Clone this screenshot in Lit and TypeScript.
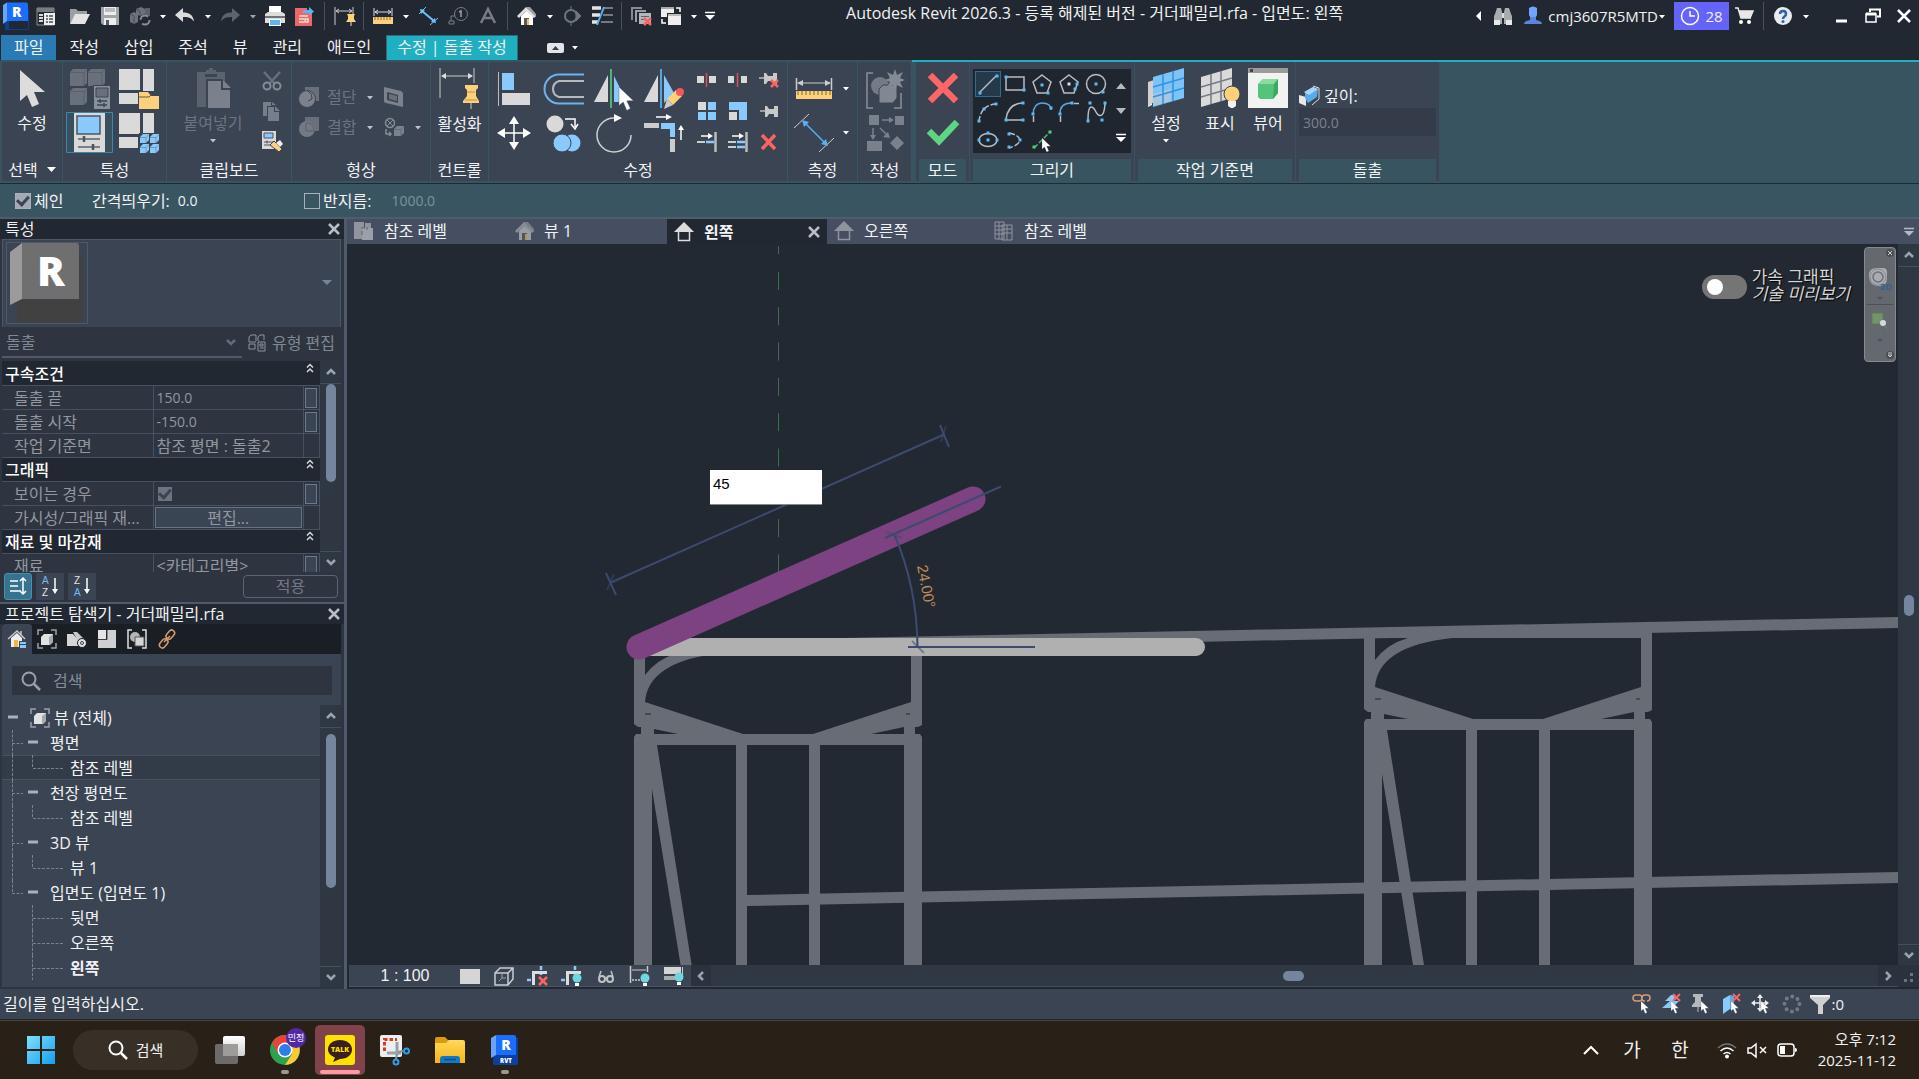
import { LitElement, html, svg, css, nothing } from "lit";
import { customElement, state } from "lit/decorators.js";
import { classMap } from "lit/directives/class-map.js";

const W = "#d9d9d9";
const B = "#8ac9fb";
const G = "#69707c";
const Y = "#fdd17c";
const R = "#fb6462";
const N = "#3b4453";

const icon = (w: number, h: number, body: unknown) =>
  html`<svg class="ico" width=${w} height=${h} viewBox="0 0 ${w} ${h}" fill="none" aria-hidden="true">${body}</svg>`;

const caret = (c = "#fff") => icon(8, 5, svg`<path d="M1 1h6L4 4.500z" fill=${c}/>`);
const chevron = (dir: "up" | "down" | "left" | "right") => {
  const d = { up: "M3 8l4-4 4 4", down: "M3 5l4 4 4-4", left: "M9 3L5 7l4 4", right: "M5 3l4 4-4 4" }[dir];
  return icon(14, 14, svg`<path d=${d} stroke="#9aa3b2" stroke-width="2.500"/>`);
};
const cross = (size: number, c: string, w: number) =>
  icon(size, size, svg`<path d="M1 1L${size - 1} ${size - 1}M${size - 1} 1L1 ${size - 1}" stroke=${c} stroke-width=${w}/>`);

/* Quick access bar */
const revitLogo = icon(28, 28, svg`
  <path d="M3 5l4-2v24h18a1 1 0 0 0 1-1V8l1-1v19a2 2 0 0 1-2 2H3z" fill="#0b3f96"/>
  <path d="M1 3l4-2.500V19l-4 3z" fill="#6aa5f5"/><path d="M5 .5h19q2 0 2 2V19H5z" fill="#1b6dfb"/>
  <text x="10" y="15" font-family="Open Sans,sans-serif" font-weight="800" font-size="14" fill="#fff">R</text>`);
const qHome = icon(20, 20, svg`<path d="M1 2h17v17H1z" stroke="#8b8f95"/><path d="M1 2h17v4H1z" fill="#777c83"/><path d="M3 8h4v2H3zM3 11h4v2H3zM3 14h4v2H3z" fill=${W}/><path d="M8 7h11v12H8z" fill="#eee"/><path d="M10 10h2m1 0h4M10 13h2m1 0h4M10 16h2m1 0h4" stroke="#444b57" stroke-width="1.500"/>`);
const qOpen = icon(22, 20, svg`<path d="M1 18V3h6l2 2h9v4H6z" fill="#9b9fa4"/><path d="M1 18L6 8h15l-5 10z" fill="#e4e4e4"/>`);
const qSave = icon(20, 20, svg`<path d="M1 1h18v18H3l-2-2z" fill="#a2a5aa"/><path d="M4 1h12v8H4z" fill="#eee"/><path d="M5 3h10M5 5h10" stroke="#888" stroke-width="1"/><path d="M4 12h12v7H4z" fill="#eee"/><path d="M6 14h3v5H6z" fill="#555c66"/>`);
const qSync = icon(22, 20, svg`<path d="M1 8l4-2 4 2v8l-4 2-4-2zM7 3l5-2 4 2v5l-5 2-4-2z" fill="#6d7178"/><path d="M1 8l4 2v8M7 3l4 2v5" stroke="#4b5059"/><path d="M16 2h5v8h-5z" fill="#5c6169"/><circle cx="16" cy="14" r="4.500" stroke="#8a8f97" stroke-width="2" stroke-dasharray="10 4"/>`);
const arrowBack = (c: string) => svg`<path d="M1 9l8-7v4.500c6 0 10 2 11 9-3-4-6-4.500-11-4.500v5z" fill=${c}/>`;
const qUndo = icon(22, 20, arrowBack("#dcdcdc"));
const qRedo = icon(22, 20, svg`<g transform="matrix(-1 0 0 1 22 0)">${arrowBack("#5d636d")}</g>`);
const qPrint = icon(22, 20, svg`<path d="M5 0h12v7H5z" fill="#fff"/><path d="M1 8l3-2h14l3 2v9H1z" fill="#dcdcdc"/><path d="M1 10h20v2H1z" fill="#6d737c"/><path d="M5 13h12v7H5z" fill="#fff"/><path d="M6 14h10v5H6z" fill="#5db6f7"/>`);
const qExport = icon(22, 20, svg`<path d="M1 2h12v5h5v13H1z" fill="#e9686a"/><path d="M5 10h9M5 13h5M5 16h5M11 13h3v3h-3z" stroke="#fbdada" stroke-width="1.500"/><path d="M9 4h6V1l5 4.500-5 4V7H9z" fill="#57b5f5"/>`);
const qDimPin = icon(22, 20, svg`<path d="M2 1v18M20 1v8" stroke="#ccc"/><path d="M3 5h16M6 3L3 5l3 2M16 3l3 2-3 2" stroke="#ccc"/><path d="M14 8h8l-1 2v3l2 3H13l2-3v-3z" fill=${Y}/><path d="M18 16v4" stroke="#ddd"/>`);
const qMeasure = icon(22, 20, svg`<path d="M2 2v8M20 2v8M3 6h16M6 4L3 6l3 2M16 4l3 2-3 2" stroke="#ddd"/><path d="M1 11h20v7H1z" fill=${Y}/><path d="M3 11v3m3-3v3m3-3v3m3-3v3m3-3v3m3-3v3" stroke="#8d6b2b"/>`);
const qAligned = icon(22, 20, svg`<path d="M2 8l7-7M13 19l8-7" stroke="#6fc0fa"/><path d="M5 5l12 10" stroke="#6fc0fa" stroke-width="2"/><path d="M3 3l5 1-4 4zM19 17l-5-1 4-4z" fill="#6fc0fa"/>`);
const qTag = icon(22, 20, svg`<circle cx="14" cy="8" r="6.500" stroke="#777c83"/><path d="M8 10H4v5M2 15h5v3H2z" stroke="#777c83"/><path d="M12 6l2-1v6" stroke="#9a9ea5" stroke-width="1.500"/>`);
const qText = icon(20, 20, svg`<path d="M3 17L10 3l7 14M6 12h8" stroke="#777c83" stroke-width="2.500"/>`);
const house = (roof: string, wall: string, door: string) => svg`<path d="M5 10v9h12v-9l-6-6z" fill=${wall}/><path d="M1 10l9-9 10 9-2 2-8-7-7 7z" fill=${roof}/><path d="M10 1l4-0 6 7v3z" fill="#9a9da1"/><path d="M8 12h5v7H8z" fill="#565b62"/><path d="M11 13h2v6h-2z" fill=${door}/>`;
const qHouse = icon(22, 20, house("#e0e0e0", "#fff", "#f3c155"));
const qSection = icon(22, 20, svg`<circle cx="10" cy="10" r="6" stroke="#6f757e" stroke-width="2"/><path d="M15 5l5 5-5 5zM10 0v4m0 12v4" fill="#6f757e" stroke="#6f757e"/>`);
const qThin = icon(22, 20, svg`<path d="M1 2h9M1 9h8M1 16h6" stroke="#e4e4e4" stroke-width="3.500"/><path d="M13 2h9M12 9h10M10 16h12" stroke="#c8c8c8" stroke-width="1"/><path d="M13 1L6 19" stroke="#5daef0" stroke-width="2"/>`);
const qCloseWin = icon(22, 20, svg`<path d="M1 14V1h11v2H3v11z" fill="#888c92"/><path d="M5 16V4h11v2H7v10z" fill="#9a9da3"/><path d="M9 7h12v11H9z" fill="#b4b7bc"/><path d="M11 10h8v1h-8zM11 13h5v1h-5z" fill="#5c626c"/><path d="M14 12l7 7m0-7l-7 7" stroke=${R} stroke-width="2.500"/>`);
const qSwitch = icon(22, 20, svg`<path d="M1 1h13v10H1z" fill="#eee"/><path d="M1 1h13v2H1z" fill="#aaa"/><path d="M7 7h15v13H7z" fill="#222831"/><path d="M8 8h13v11H8z" fill="#eee"/><path d="M8 8h13v2H8z" fill="#bbb"/><path d="M16 2h4v4M2 13v4h4" stroke="#fff" stroke-width="1.500"/>`);
const customize = (c: string) => icon(12, 10, svg`<path d="M1 1.500h10" stroke=${c} stroke-width="1.500"/><path d="M1 4h10L6 9z" fill=${c}/>`);
const binoc = icon(20, 20, svg`<path d="M2 8l2-6h4l1 4v12H1v-8zM18 8l-2-6h-4l-1 4v12h8v-8z" fill="#a8abb0"/><path d="M1 14h6v5H1zM13 14h6v5h-6z" fill="#e8e8e8"/><path d="M9 7h2v5H9z" fill="#ddd"/>`);
const person = icon(20, 20, svg`<path d="M6 2q4-3 8 0v7q-1 3-4 3t-4-3z" fill="#74a3ff"/><path d="M1 18q0-3 6-4v-3h6v3q6 1 6 4z" fill="#5b86e0"/>`);
const clock = icon(20, 20, svg`<circle cx="10" cy="10" r="8.500" stroke="#fff" stroke-width="1.500"/><path d="M10 5v5h5" stroke="#fff" stroke-width="1.500"/>`);
const cart = icon(20, 20, svg`<path d="M1 2h3l3 10h10M4.500 5H19l-3 7" stroke="#eee" stroke-width="1.500"/><path d="M5 5h14l-3 7H7z" fill="#e8e8e8"/><circle cx="7" cy="16" r="2" fill="#fff"/><circle cx="15" cy="16" r="2" fill="#fff"/>`);
const help = icon(20, 20, svg`<circle cx="10" cy="10" r="9" fill="#e9ebee"/><path d="M7 8q0-3 3-3t3 3q0 1.500-1.500 2.500T10 13" stroke="#2c5fb5" stroke-width="2.500"/><circle cx="10" cy="15.500" r="1.500" fill="#2c5fb5"/>`);

/* Ribbon, large */
const cursorBody = (x: number, y: number, k: number) => svg`<path transform="translate(${x} ${y}) scale(${k})" d="M0 0v31l7-6 6 14 6-3-6-13h11z" fill="#fff" stroke="#3b4453" stroke-width=".6"/>`;
const iModify = icon(40, 40, svg`<path d="M8 2v31l7-6 5 12 7-3-5-12h11z" fill="#dcdcdc"/>`);
const cube = (x: number, y: number, s: number, c: string) => svg`<path d="M${x} ${y + 3}l3-3h${s - 3}v${s - 3}l-3 3H${x}z" fill=${c}/><path d="M${x} ${y + 3.5}h${s - 3}v${s - 3.5}M${x + s - 3} ${y + 3.5}l3-3" stroke=${N} stroke-opacity=".35"/>`;
const iTypeProps = icon(40, 40, svg`${cube(0, 0, 17, G)}${cube(18, 0, 17, G)}${cube(0, 19, 17, G)}<path d="M23 16h17v24H23z" fill=${N}/><path d="M24 17h16v23H24z" fill="#8a909b"/><path d="M26 19h12v9H26z" fill=${G} stroke=${N}/><path d="M27 32h10M30 30v4M27 36h10M34 34v4" stroke=${N} stroke-width="1.500"/>`);
const tiles = svg`<path d="M0 0h21v21H0zM24 0h11v25H24zM0 24h19v11H0z" fill="#dadada"/>`;
const iFamilyCat = icon(40, 40, svg`${tiles}<path d="M19 22h22v19H19z" fill=${N}/><path d="M20 23h9l3 4h8v13H20z" fill=${Y}/><path d="M20 28h10l3-3" stroke="#6b5a36"/>`);
const iProps = icon(47, 41, svg`<path d="M.5.5h46v40H.5z" fill="#39505f" stroke="#3d86ac"/><path d="M8 1h31v39H8z" fill=${W}/><path d="M11 4h23v18H11z" fill=${B} stroke="#4c5563" stroke-width="1.500"/><path d="M12 27h22M12 35h22" stroke="#5b626d" stroke-width="1.500"/><path d="M18 24v6M27 32v6" stroke="#4c5563" stroke-width="2.500"/>`);
const iFamilyTypes = icon(40, 40, svg`${tiles}<path d="M20 20h21v21H20z" fill=${N}/>${cube(21, 21, 9, B)}${cube(31, 21, 9, B)}${cube(21, 31, 9, B)}${cube(31, 31, 9, B)}`);
const iPaste = icon(40, 40, svg`<path d="M4 4h9V2h3V0h4v2h3v2h9v35H4z" fill="#5b626e"/><path d="M12 6h12v3H12z" fill=${N}/><path d="M13 11h16l9 9v20H13z" fill=${N}/><path d="M15 13h13v9h9v18H15z" fill="#7a818c"/><path d="M30 12l8 8h-8z" fill="#7a818c"/>`);
const iCut = icon(20, 20, svg`<path d="M2 1l11 12M18 1L7 13" stroke=${G} stroke-width="2.500"/><circle cx="5" cy="15" r="3.500" stroke="#858b95" stroke-width="2"/><circle cx="15" cy="15" r="3.500" stroke="#858b95" stroke-width="2"/>`);
const iCopyClip = icon(20, 20, svg`<path d="M1 1h8v4H5v10H1z" fill="#777e89"/><path d="M6 6h6v5h5v9H6z" fill="#777e89"/><path d="M13 5l5 5h-5zM10 1l4 3h-4z" fill="#777e89"/>`);
const iMatch = icon(20, 20, svg`<path d="M0 0h14v18H0z" fill=${W}/><path d="M2 2h9v5H2z" fill=${B} stroke="#4c5563"/><path d="M2 11h9M2 14h7M5 9.500v3" stroke="#4c5563"/><path d="M8 14l4-4 8 8-3 3z" fill=${Y} stroke=${N}/><path d="M14 12l4-3 3 4-3 3z" fill="#eee"/>`);
const iCope = icon(20, 20, svg`<path d="M6 0h14v14H6z" fill="#69707c"/><circle cx="8" cy="12" r="8.500" fill="#7c828d" stroke=${N}/><path d="M9 4q5 3 4 8l-4 2" stroke=${N}/>`);
const iJoin = icon(20, 20, svg`<path d="M6 0h14v14H6z" fill="#69707c"/><circle cx="8" cy="12" r="8" fill="#737a85"/><path d="M7 6q8-1 8 8H7z" stroke="#59606c"/>`);
const iWallJoin = icon(20, 20, svg`<path d="M0 0l17 4 2 2v14L2 16l-2-1z" fill="#7c828d"/><path d="M3 5l11 3v8L3 13z" fill=${N}/><path d="M5 7l8 2v5l-8-2z" fill=${G}/>`);
const iPaintOff = icon(20, 20, svg`<circle cx="6" cy="6" r="4.500" stroke="#858b95" stroke-width="1.500"/><path d="M3 3l6 6m0-6L3 9" stroke="#858b95"/><path d="M2 12v5h5M5 15l2 2-2 2" stroke="#858b95" stroke-width="1.500"/>${cube(10, 9, 10, "#7c828d")}`);
const pin = svg`<path d="M26 17h13v3l-2 2v6l3 5v2H24v-2l4-5v-6l-2-2z" fill=${Y}/><path d="M28 24h8M26 32h12" stroke="#bb9145"/><path d="M32 35v6" stroke="#ccc"/>`;
const iActivate = icon(41, 41, svg`<path d="M1 0v30M35 0v15" stroke="#c9c9c9"/><path d="M3 8h30" stroke="#c9c9c9"/><path d="M2 8l5-3v6zM34 8l-5-3v6z" fill="#dcdcdc"/>${pin}`);
const iAlign = icon(40, 40, svg`<path d="M4.500 3v34" stroke="#bbb"/><path d="M8 4h12v17H8z" fill=${B}/><path d="M8 24h28v12H8z" fill=${W}/>`);
const iOffset = icon(40, 40, svg`<path d="M40 5.500H15a14.500 14.500 0 0 0 0 29h25" stroke="#6db4ee" stroke-width="2"/><path d="M40 12H15q-6 2-6 8t6 8h25" stroke="#b6b9be" stroke-width="2"/>`);
const iMirrorPick = icon(40, 40, svg`<path d="M14 6v27H0z" fill=${W}/><path d="M20 7l6 12v14h-6z" fill=${B}/><path d="M17 0v39" stroke="#4fb574" stroke-width="2"/>${cursorBody(25, 18, 0.6)}`);
const iMirrorDraw = icon(40, 40, svg`<path d="M14 6v27H0z" fill=${W}/><path d="M20 6l10 18-10 10z" fill=${B}/><path d="M17 0v39" stroke="#5aa4de" stroke-width="2"/><path d="M23 30l9-9 6 6-9 9z" fill=${Y}/><path d="M23 30l6 6-9 4z" fill="#ccc"/><circle cx="36" cy="23" r="4" fill="#f2585c"/>`);
const iMove = icon(40, 40, svg`<path d="M20 8v24M8 20h24" stroke="#fff" stroke-width="1.500"/><path d="M20 3l5 8H15zM20 37l5-8H15zM3 20l8-5v10zM37 20l-8-5v10z" fill="#fff"/>`);
const iCopy = icon(40, 40, svg`<circle cx="11" cy="11" r="8.500" fill=${W}/><path d="M21 6h10v8M27 11l4 5 3-5" stroke="#fff" stroke-width="1.500"/><circle cx="28" cy="30" r="8.500" fill=${B}/><circle cx="18" cy="30" r="9" fill=${B} stroke=${N}/>`);
const iRotate = icon(40, 40, svg`<path d="M20 5a17 17 0 1 0 17 17" stroke="#cfcfcf" stroke-width="1.500" /><path d="M20 1l8 4-8 4z" fill="#fff"/>`);
const iTrim = icon(40, 40, svg`<path d="M0 10h15v5H0z" fill="#ccc"/><path d="M17 10h14v14h-5v-8h-9z" fill=${B}/><path d="M26 26h5v13h-5z" fill="#ccc"/><path d="M12 4h12M37 27V15" stroke="#fff" stroke-width="1.500"/><path d="M22 1l6 3-6 3zM34 17l3-5 3 5z" fill="#fff"/>`);
/* Ribbon, small */
const iSplit = icon(20, 20, svg`<path d="M0 6h7v7H0zM12 6h7v7h-7z" fill=${W}/><path d="M9.500 3v14" stroke="#d65357" stroke-width="1.500"/>`);
const iSplitGap = icon(20, 20, svg`<path d="M0 6h6v7H0zM13 6h6v7h-6z" fill=${W}/><path d="M9.500 3v14" stroke="#d65357" stroke-width="1.500"/>`);
const pinFlat = svg`<path d="M0 8h6" stroke="#bbb" stroke-width="1.500"/><path d="M5 3h2l2 3h5V3h4v11h-4v-3H9l-2 3H5z" fill="#c9c9c9"/>`;
const iUnpin = icon(20, 20, svg`${pinFlat}<path d="M12 10l7 7m0-7l-7 7" stroke=${R} stroke-width="2.500"/>`);
const iPin = icon(20, 20, svg`<g transform="translate(1 2)">${pinFlat}</g>`);
const iArray = icon(20, 20, svg`<path d="M1 1h8v8H1z" fill=${W}/><path d="M11 1h8v8h-8zM1 11h8v8H1zM11 11h8v8h-8z" fill=${B}/>`);
const iScale = icon(20, 20, svg`<path d="M1 1h18v18h-8v-10H1z" fill=${B}/><path d="M1 11h8v8H1z" fill=${W}/>`);
const iExtend = icon(20, 20, svg`<path d="M4 4h8" stroke="#fff" stroke-width="1.500"/><path d="M11 1l5 3-5 3z" fill="#fff"/><path d="M0 10h8" stroke="#ccc" stroke-width="2"/><path d="M9 10h8" stroke=${B} stroke-width="2.500"/><path d="M18.500 0v20" stroke="#bbb" stroke-width="2.500"/>`);
const iExtendMulti = icon(20, 20, svg`<path d="M4 4h8" stroke="#fff" stroke-width="1.500"/><path d="M11 1l5 3-5 3z" fill="#fff"/><path d="M0 10h8M0 15h8" stroke="#ccc" stroke-width="2"/><path d="M9 10h8M9 15h8" stroke=${B} stroke-width="2.500"/><path d="M18.500 0v20" stroke="#bbb" stroke-width="2.500"/>`);
const iDelete = icon(20, 20, svg`<path d="M3 3l13 14M16 3L3 17" stroke=${R} stroke-width="3.500"/>`);
const iMeasure = icon(40, 40, svg`<path d="M2.500 9v12M37.500 9v12" stroke="#ccc" stroke-width="1.500"/><path d="M4 14h32" stroke="#ccc"/><path d="M3 14l6-3v6zM37 14l-6-3v6z" fill="#ccc"/><path d="M2 22h36v8H2z" fill=${Y}/><path d="M4 22v4m4-4v4m4-4v4m4-4v4m4-4v4m4-4v4m4-4v4m4-4v4m4-4v4" stroke="#7a6238"/>`);
const iDimension = icon(40, 40, svg`<path d="M0 15L15 1M25 39l15-14" stroke="#ccc"/><path d="M10 9l22 22" stroke="#5cb0f2" stroke-width="1.500"/><path d="M8 7l7 2-5 5zM34 33l-7-2 5-5z" fill="#5cb0f2"/>`);
const iCreateGroup = icon(40, 40, svg`<path d="M8 4H2v35h6M29 39h7V24" stroke="#8a909b" stroke-width="1.500"/><circle cx="15" cy="17" r="9" fill="#747b86"/><path d="M14 20l4-4h14v13l-4 5H14z" fill="#828893" stroke=${N}/><path d="M30 0l2 6 6-3-3 6 5 2-5 2 3 6-6-3-2 6-2-6-6 3 3-6-5-2 5-2-3-6 6 3z" fill="#858b95"/>`);
const iCreateSimilar = icon(40, 40, svg`<path d="M4 2h10v10H4zM30 3h9v9h-9zM2 28h15v10H2zM25 30l7-7 7 7-7 7z" fill="#7a818c"/><path d="M17 7h9M8 15v9M15 15l8 8" stroke="#7a818c" stroke-width="1.500"/><path d="M24 4l5 3-5 3zM5 22l3 5 3-5zM25 25l-7-1 5-5z" fill="#7a818c"/>`);
const iCancel = icon(32, 32, svg`<path d="M3 3l26 26M29 3L3 29" stroke="#fe6666" stroke-width="6.500"/>`);
const iFinish = icon(32, 32, svg`<path d="M2 15l10 10L30 6" stroke="#5ed584" stroke-width="6.500"/>`);
const dot = (x: number, y: number, c = "#5fb8f5") => svg`<path d="M${x - 1.5} ${y - 1.5}h3v3h-3z" fill=${c}/>`;
const dstroke = "#b9bcc1";
const draws: [string, unknown][] = [
  ["선", svg`<path d="M4 20L20 4" stroke=${dstroke} stroke-width="1.500"/>${dot(4, 21)}${dot(21, 4)}`],
  ["직사각형", svg`<path d="M3 5h18v13H3z" stroke=${dstroke} stroke-width="1.500"/>${dot(3, 5)}${dot(21, 18)}`],
  ["내접 다각형", svg`<path d="M12 3l9 7-4 11H7L3 10z" stroke=${dstroke} stroke-width="1.500"/>${dot(12, 13)}${dot(18, 21)}`],
  ["외접 다각형", svg`<path d="M12 3l9 7-4 11H7L3 10z" stroke=${dstroke} stroke-width="1.500"/>${dot(12, 12, "#ddd")}${dot(20, 12)}${dot(18, 17)}`],
  ["원", svg`<circle cx="12" cy="12" r="9.500" stroke=${dstroke} stroke-width="1.500"/>${dot(12, 12)}${dot(19, 20)}`],
  ["시작-끝-반지름 호", svg`<path d="M3 21Q5 5 20 4" stroke=${dstroke} stroke-width="1.500" stroke-dasharray="5 2"/>${dot(3, 21)}${dot(8, 9)}${dot(20, 4)}`],
  ["중심-끝 호", svg`<path d="M3 19Q5 4 19 3M3 20h16" stroke=${dstroke} stroke-width="1.500"/>${dot(3, 20)}${dot(20, 3)}${dot(20, 20)}`],
  ["접선 끝 호", svg`<path d="M3 14Q4 3 12 3q9 0 9 7" stroke="#5aa8e3" stroke-width="1.500"/><path d="M3.500 16v6" stroke=${dstroke} stroke-width="1.500"/>${dot(3, 14)}${dot(21, 8)}`],
  ["모깎기 호", svg`<path d="M3 14Q3 3 14 3" stroke="#5aa8e3" stroke-width="1.500"/><path d="M3.500 16v6M17 3.500h5" stroke=${dstroke} stroke-width="1.500"/>${dot(3, 14)}${dot(15, 3)}`],
  ["스플라인", svg`<path d="M4 20C4 0 10 8 12 12s8 8 9-8" stroke=${dstroke} stroke-width="1.500"/>${dot(4, 21)}${dot(6, 3)}${dot(18, 20)}${dot(21, 3)}`],
  ["타원", svg`<ellipse cx="12" cy="12" rx="9" ry="6.500" stroke=${dstroke} stroke-width="1.500"/>${dot(3, 12)}${dot(12, 12)}${dot(21, 12)}${dot(12, 5)}`],
  ["부분 타원", svg`<path d="M6 5q10 2 11 7-1 5-11 8" stroke=${dstroke} stroke-width="1.500" stroke-dasharray="6 2"/>${dot(6, 6)}${dot(17, 12)}${dot(6, 19)}`],
  ["선 선택", svg`<path d="M4 20L20 4" stroke="#4fb574" stroke-width="1.500" stroke-dasharray="5 2"/>${dot(4, 19, "#4fd07c")}${dot(20, 4, "#4fd07c")}${cursorBody(12, 10, 0.36)}`],
];
const iWorkPlane = icon(40, 40, svg`<path d="M2 17l4-2v22l-4 2z" fill="#eee"/><path d="M2 14l6-2v22l-6 4z" fill="#d0d0d0"/><path d="M7 9L38 0v30L7 39z" fill="#7cc3f8"/><path d="M7 26l18-5v12L7 38z" fill="#a9c6df"/><path d="M17 6v30M27 3v30M7 19l31-9M7 29l31-9" stroke="#2e93e3" stroke-width="1.500"/>`);
const iShowPlane = icon(40, 40, svg`<path d="M1 9L32 0v30L1 39z" fill="#dadada"/><path d="M11 6v30M21 3v30M1 19l31-9M1 29l31-9" stroke="#777c84" stroke-width="1.500"/><circle cx="32" cy="26" r="8" fill=${Y} stroke=${N}/><path d="M28 33h8v5l-3 2h-2l-3-2z" fill="#f2f2f2"/>`);
const iViewer = icon(40, 40, svg`<path d="M0 0h40v40H0z" fill="#f2f2f2"/><path d="M0 0h40v5H0z" fill="#9b9b9b"/><path d="M2 1h3v3H2z" fill="#444"/><path d="M10 16l5-5h15v14l-5 6H12l-2-2z" fill="#55c47b"/><path d="M10 16l5-5h15l-4 5z" fill="#8adca3"/><path d="M26 16l4-5v14l-5 6z" fill="#3aa961"/>`);
const iDepth = icon(20, 20, svg`<path d="M0 9l7 2v9l-7-3z" fill="#e8e8e8"/><path d="M6 6l8-5 5 2-1 8-9 6-3-5z" fill="#5aa9ea"/><path d="M5 6l9-5 5 2-9 6z" fill="#a8d5f7"/><path d="M14 0l6 2v11l-7 6" stroke="#ddd"/>`);

/* Panels */
const iFamilyThumb = icon(82, 82, svg`<path d="M.5.5h81v81H.5z" stroke="#4c5a6c"/><path d="M11 58h62V14q4 1 4 4v60q0 3-4 3H15q-4 0-4-4z" fill="#414141"/><path d="M4 10L16 1v56L4 63z" fill="#9b9b9b"/><path d="M16 1h54q3 0 3 3v53H16z" fill="#6f6f6f"/><text x="31" y="44" font-family="Open Sans,sans-serif" font-weight="800" font-size="41" fill="#fff">R</text>`);
const iEditType = icon(18, 18, svg`<path d="M1 3l2-2h5v6M1 3v5h7M10 3l2-2h4v5M10 3v4M1 10v5h6M1 10h6v5" stroke="#8e96a3"/><path d="M10 8h7v9h-7z" stroke="#8e96a3"/><path d="M12 10h3v2h-3zM12 14h4" stroke="#8e96a3"/>`);
const iSortList = icon(18, 18, svg`<path d="M1 4h8M1 9h8M1 14h11" stroke="#fff" stroke-width="1.500"/><path d="M14 1v16M11 4l3-3 3 3M11 14l3 3 3-3" stroke="#fff" stroke-width="1.500"/>`);
const sortIcon = (a: string, b: string, ca: string, cb: string) => icon(20, 20, svg`<text x="2" y="8" font-family="Liberation Sans,sans-serif" font-size="10" fill=${ca}>${a}</text><text x="2" y="20" font-family="Liberation Sans,sans-serif" font-size="10" fill=${cb}>${b}</text><path d="M15 2v14" stroke="#fff" stroke-width="1.500"/><path d="M12 13h6l-3 5z" fill="#fff"/>`);
const iDoubleUp = icon(10, 10, svg`<path d="M2 4.500l3-3 3 3M2 9l3-3 3 3" stroke="#d5d8dc" stroke-width="1.500"/>`);
const brackets = svg`<path d="M6 1H1v5M14 1h5v5M6 19H1v-5M14 19h5v-5" stroke="#9aa0aa" stroke-width="1.500"/>`;
const iViews = icon(20, 20, svg`${brackets}<path d="M4 8l3-3h9v8l-3 3H4z" fill="#e2e2e2"/><path d="M12 8l4-3v8l-4 3z" fill="#a5a8ad"/>`);
const browserTabs: [string, unknown][] = [
  ["프로젝트", icon(20, 20, svg`<path d="M4 9v9h11V9l-5-5z" fill="#eee"/><path d="M1 10l9-8 8 8M14 2v4" stroke="#c9c9c9" stroke-width="1.500"/><path d="M7 11h4v7H7z" fill="#f0b840"/><path d="M12 12h8v8h-8z" fill=${N}/><path d="M13 13h6v2h-6zM13 16h6v3h-6z" fill=${B}/>`)],
  ["뷰", iViews],
  ["시트", icon(20, 20, svg`<path d="M0 5h6l8 9-2 3H0z" fill="#d5d5d5"/><path d="M6 3h4l9 9-2 6h-3z" fill="#cacaca"/><circle cx="15" cy="14" r="4.500" fill="#e0e0e0" stroke="#1a1e25"/><circle cx="15" cy="14" r="1.500" stroke="#3a3f47"/>`)],
  ["일람표", icon(20, 20, svg`<path d="M1 1h8v9H1z" fill="#e5e5e5"/><path d="M10 1h9v18H1v-8h9z" fill="#d0d0d0"/><path d="M1 10.500h9V1" stroke="#3a3f47"/>`)],
  ["패밀리", icon(20, 20, svg`<path d="M5 1H1v18h4M15 1h4v18h-4" stroke="#e0e0e0" stroke-width="1.500"/><circle cx="8" cy="8" r="5" fill="#b5b5b5"/><path d="M8 8h9v9H8z" fill="#d5d5d5" stroke="#555"/>`)],
  ["링크", icon(20, 20, svg`<g stroke="#d79a72" stroke-width="1.500"><rect x="8.500" y="3" width="10" height="6" rx="3" transform="rotate(-50 13 6)"/><rect x="1.500" y="11" width="10" height="6" rx="3" transform="rotate(-50 7 14)"/><path d="M7 13l6-6"/></g>`)],
];
const iSearch = (c: string, w: number) => icon(20, 20, svg`<circle cx="8" cy="8" r="6.500" stroke=${c} stroke-width=${w}/><path d="M13 13l6 6" stroke=${c} stroke-width=${w + 0.5}/>`);

/* View tabs */
const tPlan = icon(20, 20, svg`<path d="M0 1h10v17H0z" fill="#8f949e"/><path d="M11 2h6v6h-6z" fill="#8f949e"/><path d="M8 7h11v12H8z" fill="#9a9fa9"/><path d="M7 7h4M13 6v3M8 10v4" stroke="#5d6577"/>`);
const tHouse = icon(20, 20, svg`<g opacity=".6">${house("#b5b5b5", "#d0d0d0", "#f3c155")}</g>`);
const tElev = (c: string) => icon(20, 20, svg`<path d="M10 0l10 10H0z" fill=${c}/><path d="M4.500 10v8.500h11V10" stroke=${c} stroke-width="1.500"/>`);
const tCeil = icon(20, 20, svg`<path d="M1 1h9v17H1zM8 4h10v15H8z" stroke="#8f949e"/><path d="M1 5h9M1 9h9M1 13h9M5 1v17M8 8h10M8 12h10M13 4v15" stroke="#8f949e"/>`);

/* View control bar */
const bulb = (x: number, y: number) => svg`<circle cx=${x} cy=${y} r="4.500" fill="#6fd6df"/><path d="M${x - 2} ${y + 5}h4v3h-4z" fill="#fff"/>`;
const crop = svg`<path d="M14 0v4M0 14h4M14 6v3" stroke=${B} stroke-width="2.500"/><path d="M20 6.500H6.500V19" stroke="#ddd" stroke-width="3"/>`;
const viewControls: [string, unknown][] = [
  ["상세 수준", icon(22, 20, svg`<path d="M1 3h20v15H1z" fill="#d5d5d5"/>`)],
  ["비주얼 스타일", icon(22, 20, svg`<path d="M2 7l5-5h13v11l-5 6H2zM2 7h13v12M15 7l5-5" stroke="#c9ccd1" stroke-width="1.500"/><path d="M6 15l3-3V7M9 12h4" stroke="#9aa0aa"/>`)],
  ["뷰 자르기 안 함", icon(22, 20, svg`${crop}<path d="M12 11l8 8m0-8l-8 8" stroke=${R} stroke-width="2.500"/>`)],
  ["자르기 영역 표시", icon(22, 20, svg`${crop}${bulb(16, 12)}`)],
  ["임시 숨기기/분리", icon(22, 20, svg`<circle cx="7" cy="13" r="3" stroke="#bfc2c7" stroke-width="2"/><circle cx="15" cy="13" r="3" stroke="#bfc2c7" stroke-width="2"/><path d="M4 11l2-6M18 11l-2-6M10 12h2" stroke="#bfc2c7" stroke-width="1.500"/>`)],
  ["구속조건 표시", icon(22, 20, svg`<path d="M1.500 0v17M18.500 0v6" stroke="#ccc" stroke-width="1.500"/><path d="M3 4h14" stroke="#ccc"/><path d="M3 14h10" stroke="#ccc" stroke-width="1.500" stroke-dasharray="2 1"/>${bulb(16, 12)}`)],
  ["미리보기 가시성", icon(22, 20, svg`<path d="M1 1h17v7H1z" fill="#d5d5d5"/><path d="M1 10h17v4H1z" fill="#a9acb1"/><path d="M19.500 1v10" stroke="#ccc"/>${bulb(16, 11)}`)],
];

/* Status bar */
const stat = (body: unknown) => icon(22, 22, svg`${body}${cursorBody(10, 8, 0.32)}`);
const statusIcons: [string, unknown][] = [
  ["링크 선택", stat(svg`<path d="M5 2h3q3 0 3 3t-3 3H5q-3 0-3-3t3-3M14 8h-1q-2 0-2-3t3-3h2q3 0 3 3t-3 3" stroke="#d79a72" stroke-width="1.500"/>`)],
  ["언더레이 요소 선택", stat(svg`<path d="M1 15l8-7h9l-7 7zM4 8l6-6h5l-3 6z" fill=${B}/><path d="M12 1l7 7m0-7l-7 7" stroke=${R} stroke-width="2"/>`)],
  ["핀된 요소 선택", stat(svg`<path d="M2 1h10v3h-2v5l3 3v2H1v-2l3-3V4H2z" fill="#b5b8bd"/><path d="M7 14v5" stroke="#bbb"/>`)],
  ["면별 요소 선택", stat(svg`<path d="M2 6l7-4v14l-7 5z" fill=${B}/><path d="M9 2l4 1v14l-4-1z" fill="#5fa9e2"/><path d="M12 1l7 7m0-7l-7 7" stroke=${R} stroke-width="2"/>`)],
  ["선택 시 요소 끌기", stat(svg`<path d="M9 4v12M3 10h12" stroke="#eee" stroke-width="1.500"/><path d="M9 1l3 4H6zM9 19l3-4H6zM0 10l4-3v6zM18 10l-4-3v6z" fill="#eee"/>`)],
  ["백그라운드 프로세스", icon(22, 22, svg`<circle cx="11" cy="11" r="7.500" stroke="#727986" stroke-width="4" stroke-linecap="round" stroke-dasharray="0 5.890"/>`)],
];
const iFilter = icon(22, 22, svg`<path d="M1 2h20v3l-7 7v9h-5v-9L1 5z" fill="#cfcfcf"/><path d="M1 2h20v2H1z" fill="#f0f0f0"/>`);

/* Windows taskbar */
const wStart = icon(30, 30, svg`<defs><linearGradient id="ws" x1="0" y1="0" x2="1" y2="1"><stop stop-color="#7fe0fb"/><stop offset="1" stop-color="#149ef0"/></linearGradient></defs><path d="M1 1h13v13H1zM16 1h13v13H16zM1 16h13v13H1zM16 16h13v13H16z" fill="url(#ws)"/>`);
const wTask = icon(30, 30, svg`<defs><linearGradient id="wt" x1="0" y1="0" x2="0" y2="1"><stop stop-color="#fff"/><stop offset="1" stop-color="#cfcfcf"/></linearGradient></defs><rect y="9" width="23" height="20" rx="2" fill="#6c6b69"/><rect x="8" y="1" width="22" height="20" rx="2" fill="url(#wt)"/><path d="M8 9h15v12H8z" fill="#9d9c9b"/>`);
const wChrome = icon(30, 30, svg`<circle cx="15" cy="15" r="15" fill="#2ba24c"/><path d="M2 7.500a15 15 0 0 1 26 0L29 8H15L8 19z" fill="#e7453a"/><path d="M15 8h13a15 15 0 0 1-13 22l7-11z" fill="#fcc934"/><circle cx="15" cy="15" r="7.500" fill="#fff"/><circle cx="15" cy="15" r="6" fill="#2e7de9"/><circle cx="26" cy="3" r="10" fill="#5128a8"/><text x="26" y="6" text-anchor="middle" font-family="Noto Sans CJK KR,sans-serif" font-size="9" fill="#fff">민정</text>`);
const wTalk = icon(30, 30, svg`<rect width="30" height="30" rx="3" fill="#fae100"/><path d="M15 5c7 0 12 4 12 9.500S22 24 15 24l-7 3 2-4.500C6 21 3 18 3 14.500 3 9 8 5 15 5z" fill="#3a1d1d"/><text x="15" y="17" text-anchor="middle" font-family="Open Sans,sans-serif" font-weight="800" font-size="7" fill="#fae100">TALK</text>`);
const wSnip = icon(30, 30, svg`<rect width="22" height="22" rx="2" fill="#eceef2"/><path d="M4.500 16V4.500H17" stroke="#dc3c10" stroke-width="3" stroke-dasharray="3.500 2"/><path d="M17 7v13M7 18h14" stroke="#9aa1a8" stroke-width="3"/><path d="M18 17l5-1M17 19l-1 5" stroke="#8a9198" stroke-width="2"/><circle cx="26.500" cy="16" r="2.500" stroke="#2aa0e6" stroke-width="2"/><circle cx="16" cy="27" r="2.500" stroke="#2aa0e6" stroke-width="2"/>`);
const wFolder = icon(30, 30, svg`<defs><linearGradient id="wf" x1="0" y1="0" x2="0" y2="1"><stop stop-color="#ffd95e"/><stop offset="1" stop-color="#f6b412"/></linearGradient></defs><path d="M0 4q0-2 2-2h8l3 3h15v6H0z" fill="#dd9a09"/><path d="M0 8h11l3-3h14q2 0 2 2v21H0z" fill="url(#wf)"/><path d="M5 28v-4q0-3 3-3h14q3 0 3 3v4z" fill="#1179c8"/><path d="M9 24.500h12" stroke="#0b4f8c" stroke-width="1.500"/>`);
const wRevit = icon(30, 30, svg`<path d="M3 8l3-3 20-3q2 0 2 2v24q0 2-2 2H5q-2 0-2-2z" fill="#0d3f9e"/><path d="M1 3l5-3v20l-5 3z" fill="#6aa5f5"/><path d="M6 0h18q2 0 2 2v18H6z" fill="#1b6dfb"/><text x="16" y="15" text-anchor="middle" font-family="Open Sans,sans-serif" font-weight="800" font-size="14" fill="#fff">R</text><text x="16" y="28" text-anchor="middle" font-family="Open Sans,sans-serif" font-weight="800" font-size="6" fill="#fff">RVT</text>`);
const wWifi = icon(20, 20, svg`<path d="M1 8q9-8 18 0" stroke="#777" stroke-width="1.500"/><path d="M3.500 11q6.500-6 13 0M6.500 14q3.500-3 7 0" stroke="#fff" stroke-width="1.500"/><circle cx="10" cy="16.500" r="2" fill="#fff"/>`);
const wMute = icon(20, 20, svg`<path d="M1 8h3l5-4v13l-5-4H1z" stroke="#fff" stroke-width="1.500"/><path d="M13 7l6 6m0-6l-6 6" stroke="#fff" stroke-width="1.500"/>`);
const wBattery = icon(20, 20, svg`<rect x="1" y="4" width="16" height="12" rx="3" stroke="#fff" stroke-width="1.500"/><path d="M3 6h5v8H3z" fill="#fff"/><path d="M18 8q2 0 2 2t-2 2z" fill="#fff"/>`);

/* Girder section shape, reused for both bays of the elevation */
const bay = svg`
  <path d="M636 734h284l2 3v243h-18V745H820v235h-11V745h-62v235h-11V745H657l37 235h-11L652 789v191h-18V737z"/>
  <path d="M634 643h288v82l-4 2h-3v8h-11v-8l-33 7h-58l98-32v-49H645v22q12-16 33-22h44q-74 8-77 49l98 32h-65l-24-5v6h-13v-8h-3l-4-3z"/>
  <path d="M645 714h6M906 714h4" stroke="#222933" stroke-width="1"/>`;
const girder = svg`
  <g transform="translate(-347 -244)">
    <path d="M778.500 246v8M778.500 272v300" stroke="#3b7049" stroke-dasharray="18 17.300"/>
    <g fill="#686c74">
      <path d="M780 639.200L1240 630 1900 617v11l-660 13-380 8zM747 895l493-10 660-13v11l-660 13-493 10z"/>
      ${bay}<g transform="translate(730 -15)">${bay}</g>
    </g>
    <path d="M648 638h548a9 9 0 0 1 0 18H639z" fill="#b0b0b0"/>
    <path d="M639 647L973 499" stroke="#7d4282" stroke-width="25" stroke-linecap="round"/>
    <g stroke="#3c4a70" stroke-width="2">
      <path d="M611 582.500L944 434.500M606 573l10 22M940 425l9 22M885 538l116-51.500M894 534q23 52 23.500 113M908 647h127"/>
      <path d="M607 590l7-16M941 442l5-16M886 532l16 6M912 641l12 12" stroke-opacity=".5"/>
    </g>
    <text transform="translate(917 566) rotate(79)" font-family="Liberation Sans,sans-serif" font-size="15" fill="#c28c58">24.00°</text>
  </g>`;

type Prop = { head?: string; name?: string; value?: string; kind?: "check" | "button"; link?: boolean };
const props: Prop[] = [
  { head: "구속조건" },
  { name: "돌출 끝", value: "150.0", link: true },
  { name: "돌출 시작", value: "-150.0", link: true },
  { name: "작업 기준면", value: "참조 평면 : 돌출2" },
  { head: "그래픽" },
  { name: "보이는 경우", kind: "check", link: true },
  { name: "가시성/그래픽 재...", value: "편집...", kind: "button" },
  { head: "재료 및 마감재" },
  { name: "재료", value: "<카테고리별>", link: true },
];
type Node = { d: number; t: string; trunk?: number; twig?: number; sel?: boolean; bold?: boolean };
const tree: Node[] = [
  { d: 0, t: "뷰 (전체)" },
  { d: 1, t: "평면", trunk: 25 },
  { d: 2, t: "참조 레벨", trunk: 25, twig: 13, sel: true },
  { d: 1, t: "천장 평면도", trunk: 25 },
  { d: 2, t: "참조 레벨", trunk: 25, twig: 13 },
  { d: 1, t: "3D 뷰", trunk: 25 },
  { d: 2, t: "뷰 1", trunk: 25, twig: 13 },
  { d: 1, t: "입면도 (입면도 1)", trunk: 13 },
  { d: 2, t: "뒷면", twig: 25 },
  { d: 2, t: "오른쪽", twig: 25 },
  { d: 2, t: "왼쪽", twig: 25, bold: true },
];

@customElement("app-root")
export class AppRoot extends LitElement {
  @state() private tool = 0;
  @state() private view = 2;

  static styles = css`
    :host { display: block; font-family: "Open Sans", "Noto Sans CJK KR", sans-serif; font-size: 15px; line-height: 20px; color: #f1f2f3; }
    * { box-sizing: border-box; }
    button, input, select { font: inherit; color: inherit; background: none; border: 0; padding: 0; margin: 0; border-radius: 0; }
    button { display: flex; align-items: center; justify-content: center; white-space: nowrap; }
    .ico { display: block; flex: none; overflow: visible; }
    .ko { font-size: 16px; }
    .app { display: flex; flex-direction: column; height: 100vh; background: #222831; overflow: hidden; }

    .title { display: flex; height: 34px; padding-top: 1px; flex: none; }
    .qat, .account { display: flex; align-items: center; height: 30px; flex: none; }
    .logo { width: 31px; }
    .q { width: 30px; height: 30px; }
    .first { margin-right: 4px; }
    .ar { width: 15px; height: 30px; }
    .sep { width: 9px; height: 28px; display: flex; justify-content: center; }
    .sep::before { content: ""; width: 1px; background: #4a515c; }
    .caption { flex: 1; font-size: 16px; line-height: 25px; text-align: center; white-space: nowrap; margin: 0; font-weight: 400; }
    .collapse { width: 18px; }
    .user { font-size: 15px; }
    .trial { width: 55px; height: 28px; margin-left: 8px; gap: 5px; background: #6464fb; }
    .wins { display: flex; gap: 1px; margin-left: 14px; }

    .tabs { display: flex; gap: 1px; height: 26px; flex: none; padding: 1px 0 0 1px; font-size: 16px; }
    .tabs button { padding: 0 12px; line-height: 24px; height: 25px; align-items: flex-start; }
    .tabs .file { background: #2a7ab4; padding: 0 13px; }
    .tabs .ctx { background: #1fafc1; border: 1px solid #2f6c7c; border-bottom: 0; padding: 0 10px; margin-left: 2px; line-height: 22px; }
    .tabs .mini { align-items: center; gap: 6px; margin-left: 16px; }

    .ribbon { display: flex; flex: none; height: 124px; padding-left: 2px; background: #395461; border-bottom: 1px solid #1d2b35; }
    .panels { display: flex; padding: 2px 0; }
    .accent { flex: 1; display: flex; border-top: 2px solid #1fafc1; padding: 0 0 2px 4px; }
    .panel { display: flex; flex-direction: column; background: #3b4453; border-right: 1px solid #3a5664; height: 119px; flex: none; margin: 0; }
    .accent .panel { border-right-color: #3b5163; }
    .body { flex: 1; display: flex; padding-top: 2px; min-height: 0; }
    .name { height: 22px; line-height: 22px; font-size: 16px; text-align: center; display: flex; align-items: center; justify-content: center; gap: 9px; }
    .accent .name { margin: 0 3px; background: #395461; }
    .p-sel { width: 61px; } .p-prop { width: 104px; } .p-clip { width: 125px; } .p-geo { width: 139px; } .p-ctl { width: 58px; }
    .p-mod { width: 299px; } .p-meas { width: 70px; } .p-crt { width: 54px; }
    .p-mode { width: 54px; } .p-draw { width: 165px; } .p-wp { width: 161px; } .p-ext { width: 144px; }
    .big { flex-direction: column; justify-content: flex-start; gap: 5px; margin-top: 4px; font-size: 16px; flex: 1; }
    .p-clip .big { padding-right: 3px; }
    .off { color: #6d7480; }
    .grid { display: grid; margin-top: 4px; grid-auto-rows: 41px; row-gap: 3px; }
    .g2 { grid-template-columns: 47px 47px; column-gap: 2px; padding-left: 3px; }
    .g4 { grid-template-columns: repeat(4, 50px); }
    .g1 { grid-template-columns: 1fr; flex: 1; }
    .small { display: grid; grid-template-columns: repeat(3, 31px); grid-auto-rows: 31px; margin-left: 2px; }
    .stack { display: flex; flex-direction: column; gap: 10px; padding: 7px 9px 0 0; }
    .geo { display: flex; flex-direction: column; gap: 10px; padding: 23px 0 0 7px; }
    .geo div { display: flex; align-items: center; height: 20px; gap: 10px; }
    .geo button { gap: 8px; font-size: 16px; }
    .mrow { display: flex; align-items: center; gap: 8px; padding-left: 6px; }
    .mode { flex: 1; display: flex; flex-direction: column; align-items: center; padding-top: 8px; gap: 12px; }
    .gallery { display: flex; width: 158px; height: 84px; margin: 5px 0 0 3px; background: #20262f; padding: 2px 0 0 2px; }
    .draws { display: grid; grid-template-columns: repeat(5, 27px); grid-auto-rows: 28px; flex: none; }
    .draws button { border: 1px solid transparent; width: 26px; height: 26px; }
    .draws .on { background: #24394a; border-color: #2f6c90; }
    .gscroll { flex: 1; display: flex; flex-direction: column; justify-content: space-around; align-items: center; padding: 2px 0 0; }
    .wp { display: grid; grid-template-columns: 54px 54px 42px; padding-left: 4px; }
    .depth { display: flex; flex-direction: column; padding: 22px 3px 0; gap: 2px; flex: 1; }
    .depth label { display: flex; align-items: center; gap: 5px; font-size: 16px; height: 20px; }
    .depth input { height: 28px; width: 100%; background: #343c49; color: #7b828d; padding: 0 4px; font-size: 14px; }

    .options { display: flex; align-items: center; flex: none; height: 35px; padding: 0 15px; background: #3a5562; border-bottom: 2px solid #4f5c6c; font-size: 16px; }
    .options label { display: flex; align-items: center; gap: 3px; white-space: nowrap; }
    .options .num { font-size: 14px; width: 100px; margin-left: 5px; }
    .cb { appearance: none; width: 16px; height: 16px; border: 1px solid #a9b0b9; display: grid; place-items: center; flex: none; }
    .cb:checked { background: #a3a9b4; }
    .cb:checked::after { content: ""; width: 5px; height: 9px; border: solid #3b4453; border-width: 0 3px 3px 0; transform: rotate(42deg) translate(-1px, -1px); }
    .l1 { width: 77px; } .l2 { width: 212px; } .l3 { flex: 1; }
    .l3 .num { color: #7a939a; margin-left: 20px; }

    .main { display: flex; flex: 1; min-height: 0; }
    .side { width: 347px; flex: none; display: flex; flex-direction: column; border-right: 3px solid #4f5a6b; background: #2e3541; }
    .ptitle { display: flex; align-items: center; justify-content: space-between; height: 20px; padding: 0 4px 0 5px; background: #222831; font-size: 16px; font-weight: 400; margin: 0; flex: none; white-space: nowrap; }
    .family { display: flex; align-items: center; justify-content: space-between; height: 88px; margin: 0 3px 0 2px; padding: 0 8px 1px 3px; border: 1px solid #4c5768; background: #3b4453; border-bottom: 0; flex: none; }
    .type { display: flex; height: 31px; margin: 0 3px 0 2px; font-size: 16px; color: #818894; flex: none; }
    .type .sel { width: 240px; display: flex; align-items: center; border-bottom: 2px solid #4f5a6b; padding-right: 4px; }
    .type select { appearance: none; flex: 1; height: 28px; padding-left: 4px; }
    .type button { flex: 1; gap: 6px; }
    .list { display: flex; height: 214px; margin: 0 3px 0 2px; padding-top: 3px; flex: none; overflow: hidden; }
    .tbl { flex: 1; overflow: hidden; }
    table { width: 100%; border-collapse: collapse; table-layout: fixed; color: #9297a0; }
    .c1 { width: 151px; } .c3 { width: 16px; }
    tr { height: 24px; }
    td, th { padding: 0; border: 1px solid #465161; font-weight: 400; text-align: left; white-space: nowrap; height: 24px; line-height: 22px; overflow: hidden; }
    tbody th { padding-left: 12px; font-size: 16px; border-left: 0; }
    td { padding-left: 3px; font-size: 14px; }
    td.k { font-size: 16px; }
    td.lk { padding: 0 1px; }
    td.lk button { width: 12px; height: 20px; border: 1px solid #6c7a8f; background: #3b4453; }
    td.bt { padding: 0 1px; }
    td.bt button { width: 100%; height: 21px; border: 1px solid #64748a; background: #3b4453; }
    td .cb, td .cb:checked { border: 0; background: #6d7480; width: 14px; height: 14px; margin-left: 1px; }
    tr.head th { background: #222831; color: #fff; font-weight: 500; padding: 0 4px 0 3px; border-color: #222831 #222831 #465161; }
    .hrow { display: flex; justify-content: space-between; }
    .vs { width: 21px; flex: none; display: flex; flex-direction: column; background: #2f3743; align-items: center; padding-top: 2px; }
    .vs button { width: 100%; height: 21px; flex: none; border-bottom: 1px solid #434e5e; }
    .vs button:last-child { border-bottom: 0; border-top: 1px solid #434e5e; }
    .track { flex: 1; display: flex; flex-direction: column; align-items: center; }
    .thumb { width: 10px; border-radius: 5px; background: #75859d; }
    .t1 { height: 98px; } .t2 { height: 154px; margin-top: 6px; } .t3 { height: 21px; margin-top: 328px; }
    .foot { display: flex; align-items: center; height: 32px; padding: 0 6px 2px 4px; gap: 4px; border-bottom: 2px solid #4f5a6b; flex: none; }
    .foot button { width: 28px; height: 27px; background: #3b4453; }
    .foot .on { background: #37738f; border: 1px solid #4790ae; border-radius: 3px; }
    .foot .apply { width: 95px; height: 23px; margin-left: auto; border: 1px solid #5a6475; border-radius: 4px; background: none; color: #727985; font-size: 16px; }
    .btabs { display: flex; height: 30px; margin: 0 3px 0 2px; background: #1a1e25; flex: none; }
    .btabs button { width: 30px; height: 30px; }
    .btabs .on { background: #3b4453; border-radius: 3px 3px 0 0; }
    .browser { flex: 1; display: flex; flex-direction: column; margin: 0 3px 2px 2px; background: #3b4453; min-height: 0; }
    .find { display: flex; align-items: center; gap: 12px; margin: 12px 9px 10px 10px; padding: 0 9px; height: 29px; background: #2e3541; flex: none; }
    .find input { flex: 1; font-size: 16px; height: 27px; outline: 0; }
    .find input::placeholder { color: #858c98; opacity: 1; }
    .treebox { flex: 1; display: flex; min-height: 0; }
    .tree { list-style: none; margin: 0; padding: 0; flex: 1; overflow: hidden; font-size: 16px; }
    .tree li { display: flex; height: 25px; align-items: center; border: 1px solid transparent; border-width: 1px 0; }
    .tree .pick { background: #333b48; border-color: #48515f; }
    .tree button { line-height: 24px; gap: 4px; }
    .bold { font-weight: 600; }

    .work { flex: 1; display: flex; flex-direction: column; min-width: 0; }
    .vtabs { display: flex; height: 25px; background: #464f62; flex: none; }
    .vtab { width: 160px; height: 24px; padding: 0 7px; justify-content: flex-start; gap: 10px; font-size: 16px; }
    .vtab .x { margin-left: auto; }
    .vtab.on { background: #222831; font-weight: 600; height: 25px; }
    .vtabs .more { margin-left: auto; width: 20px; }
    .stage { flex: 1; display: flex; min-height: 0; }
    .canvas { flex: 1; position: relative; background: #222933; overflow: hidden; min-width: 0; }
    .model { position: absolute; inset: 0; width: 100%; height: 100%; display: block; }
    .length { position: absolute; left: 363px; top: 226px; width: 112px; height: 35px; background: #fff; color: #000; font: 15px/20px "Liberation Sans", sans-serif; padding: 0 3px 7px; border-bottom: 1px solid #888; outline: 0; }
    .accel { position: absolute; right: 48px; top: 24px; display: flex; align-items: center; gap: 5px; font-size: 17px; line-height: 17px; color: #d5d5d5; text-shadow: 1px 1px 1px #000; }
    .accel em { display: block; }
    .switch { appearance: none; width: 45px; height: 24px; border-radius: 12px; background: #757575; padding: 4px 5px; margin-top: 4px; }
    .switch::before { content: ""; display: block; width: 16px; height: 16px; border-radius: 8px; background: #fff; }
    .nav { position: absolute; right: 2px; top: 3px; width: 32px; height: 115px; border: 1px solid #868a90; border-radius: 4px; background: #64686f; }
    .bar { display: flex; height: 24px; flex: none; padding-left: 2px; }
    .ctl { display: flex; align-items: center; height: 22px; background: #3b4453; width: 342px; border-bottom: 1px solid #4a5566; flex: none; }
    .scale { width: 88px; font: 16px/22px "Liberation Sans", sans-serif; margin-right: 16px; padding-left: 24px; white-space: nowrap; }
    .ctl .v { width: 34px; height: 21px; }
    .hs { flex: 1; display: flex; align-items: center; height: 22px; background: #303844; border-bottom: 1px solid #434e5e; }
    .hs button { width: 20px; height: 21px; background: #2b323d; }
    .hthumb { width: 21px; height: 10px; border-radius: 5px; background: #75859d; margin-left: 572px; }
    .hs .rt { margin-left: auto; }
    .grip { width: 21px; height: 22px; background: #2b323d; padding: 8px 0 0 6px; }

    .status { display: flex; align-items: center; height: 31px; flex: none; padding: 0 75px 0 3px; background: #3b4453; border-bottom: 1px solid #1f252e; font-size: 16px; }
    .status span { flex: 1; }
    .status button { width: 30px; height: 28px; }
    .status .filter { width: auto; font-size: 15px; margin-left: 2px; }
    .task { display: flex; align-items: center; height: 59px; flex: none; background: #292117; border-top: 1px solid #4b443b; }
    .task .w { width: 50px; height: 50px; margin-right: 5px; flex-direction: column; border-radius: 5px; position: relative; }
    .task .start { margin-left: 16px; margin-right: 7px; }
    .wsearch { width: 125px; height: 40px; border-radius: 20px; background: #383027; gap: 8px; font-size: 15px; margin-right: 7px; }
    .task .talk { background: #81434b; }
    .run::after { content: ""; position: absolute; bottom: 1px; width: 8px; height: 4px; border-radius: 2px; background: #9c9894; }
    .talk::after { width: 40px; background: #ff99a2; }
    .tray { margin-left: auto; display: flex; align-items: center; padding-right: 23px; }
    .tray .ime { width: 48px; font-size: 19px; }
    .tray .more { width: 34px; }
    .net { display: flex; gap: 10px; margin-left: 13px; }
    .clock { width: 99px; flex-direction: column; align-items: flex-end; font-size: 15px; line-height: 21px; }
  `;

  private q(label: string, body: unknown, cls = "q") {
    return html`<button class=${cls} aria-label=${label}>${body}</button>`;
  }

  private gutter(n: Node) {
    const w = [28, 48, 68][n.d];
    const line = (p: string) => svg`<path d=${p} stroke="#7b828c" stroke-dasharray="3 1.500"/>`;
    return html`<svg class="ico" width=${w} height="25" viewBox="0 0 ${w} 25" aria-hidden="true">
      ${n.trunk ? line(`M10.500 0v${n.trunk}`) : nothing}
      ${n.d === 1 ? line("M10 13.500h11") : nothing}
      ${n.twig ? line(`M30.500 0v${n.twig}M31 13.500h30`) : nothing}
      ${n.d < 2 ? svg`<path d="M${n.d ? 26 : 6} 12h10" stroke="#a9b1bd" stroke-width="3"/>` : nothing}
    </svg>`;
  }

  private propRow(p: Prop) {
    if (p.head) return html`<tr class="head"><th colspan="3"><div class="hrow">${p.head}${iDoubleUp}</div></th></tr>`;
    const value =
      p.kind === "check" ? html`<td><input class="cb" type="checkbox" checked aria-label=${p.name!} /></td>`
      : p.kind === "button" ? html`<td class="bt"><button class="ko">${p.value}</button></td>`
      : html`<td class=${classMap({ k: !/^-?\d/.test(p.value!) })}>${p.value}</td>`;
    return html`<tr><th>${p.name}</th>${value}<td class="lk">${p.link ? html`<button aria-label="매개변수 연관"></button>` : nothing}</td></tr>`;
  }

  render() {
    const vt: [string, unknown][] = [
      ["참조 레벨", tPlan], ["뷰 1", tHouse], ["왼쪽", tElev("#dcdcdc")], ["오른쪽", tElev("#8f949e")], ["참조 레벨", tCeil],
    ];
    const ar = (c?: string) => html`<button class="ar" aria-label="더 보기">${caret(c)}</button>`;
    const sep = html`<i class="sep"></i>`;
    return html`<div class="app">
      <header class="title">
        <div class="qat">
          ${this.q("Revit", revitLogo, "logo")}${this.q("홈", qHome, "q first")}${this.q("열기", qOpen)}${this.q("저장", qSave)}${this.q("동기화", qSync)}${ar()}
          ${this.q("명령 취소", qUndo)}${ar()}${this.q("명령 복구", qRedo)}${ar("#a0a4aa")}${this.q("인쇄", qPrint)}${this.q("내보내기", qExport)}${sep}
          ${this.q("컨트롤 활성화", qDimPin)}${sep}${this.q("측정", qMeasure)}${ar()}${this.q("정렬 치수", qAligned)}${this.q("태그", qTag)}${this.q("문자", qText)}${sep}
          ${this.q("3D 뷰", qHouse)}${ar()}${this.q("단면도", qSection)}${this.q("가는 선", qThin)}${sep}${this.q("비활성 뷰 닫기", qCloseWin)}${this.q("창 전환", qSwitch)}${ar()}
          <button class="collapse" aria-label="사용자화">${customize("#fff")}</button>
        </div>
        <h1 class="caption">Autodesk Revit 2026.3 - 등록 해제된 버전 - 거더패밀리.rfa - 입면도: 왼쪽</h1>
        <div class="account">
          <button class="collapse" aria-label="접기">${icon(6, 10, svg`<path d="M5 0v10L0 5z" fill="#fff"/>`)}</button>
          ${this.q("찾기", binoc)}${this.q("계정", person)}
          <button class="user">cmj3607R5MTD${caret()}</button>
          <button class="trial">${clock}28</button>
          ${this.q("앱 스토어", cart)}${sep}${this.q("도움말", help)}${ar()}
          <div class="wins">
            ${this.q("최소화", icon(12, 20, svg`<path d="M0 15h11" stroke="#fff" stroke-width="3"/>`))}
            ${this.q("이전 크기로", icon(16, 16, svg`<path d="M5 4V1.500h10v7h-3" stroke="#fff" stroke-width="2"/><path d="M1 6h10v8H1z" stroke="#fff" stroke-width="1.500"/><path d="M1 6h10" stroke="#fff" stroke-width="3"/>`))}
            ${this.q("닫기", cross(14, "#fff", 2.5))}
          </div>
        </div>
      </header>
      <nav class="tabs">
        <button class="file">파일</button>
        ${["작성", "삽입", "주석", "뷰", "관리", "애드인"].map((t) => html`<button>${t}</button>`)}
        <button class="ctx">수정 | 돌출 작성</button>
        <button class="mini" aria-label="리본 최소화">${icon(18, 10, svg`<rect width="17" height="10" rx="2" fill="#e3e5e8"/><path d="M5 7h7L8.500 3z" fill="#3a404a"/>`)}${caret()}</button>
      </nav>

      <section class="ribbon">
        <div class="panels">
          <div class="panel p-sel"><div class="body"><button class="big">${iModify}수정</button></div><div class="name">선택 ${icon(9, 6, svg`<path d="M0 0h9L4.500 5z" fill="#fff"/>`)}</div></div>
          <div class="panel p-prop"><div class="body"><div class="grid g2">
            ${this.q("유형 특성", iTypeProps, "")}${this.q("패밀리 카테고리", iFamilyCat, "")}${this.q("특성", iProps, "")}${this.q("패밀리 유형", iFamilyTypes, "")}
          </div></div><div class="name">특성</div></div>
          <div class="panel p-clip"><div class="body"><button class="big off">${iPaste}붙여넣기${caret("#c0c4ca")}</button>
            <div class="stack">${this.q("잘라내기", iCut, "")}${this.q("복사", iCopyClip, "")}${this.q("유형 일치", iMatch, "")}</div></div><div class="name">클립보드</div></div>
          <div class="panel p-geo"><div class="body"><div class="geo">
            <div><button class="off">${iCope}절단</button>${caret("#c0c4ca")}${this.q("벽 결합", iWallJoin, "")}</div>
            <div><button class="off">${iJoin}결합</button>${caret("#c0c4ca")}${this.q("페인트 제거", iPaintOff, "")}${caret("#c0c4ca")}</div>
          </div></div><div class="name">형상</div></div>
          <div class="panel p-ctl"><div class="body"><button class="big">${iActivate}활성화</button></div><div class="name">컨트롤</div></div>
          <div class="panel p-mod"><div class="body">
            <div class="grid g4">${([["정렬", iAlign], ["간격띄우기", iOffset], ["대칭 - 축 선택", iMirrorPick], ["대칭 - 축 그리기", iMirrorDraw], ["이동", iMove], ["복사", iCopy], ["회전", iRotate], ["코너로 자르기", iTrim]] as [string, unknown][]).map(([l, i]) => this.q(l, i, ""))}</div>
            <div class="small">${([["분할", iSplit], ["간격 분할", iSplitGap], ["핀 해제", iUnpin], ["배열", iArray], ["축척", iScale], ["핀", iPin], ["단일 연장", iExtend], ["다중 연장", iExtendMulti], ["삭제", iDelete]] as [string, unknown][]).map(([l, i]) => this.q(l, i, ""))}</div>
          </div><div class="name">수정</div></div>
          <div class="panel p-meas"><div class="body"><div class="grid">
            <div class="mrow">${this.q("측정", iMeasure, "")}${caret()}</div><div class="mrow">${this.q("치수", iDimension, "")}${caret()}</div>
          </div></div><div class="name">측정</div></div>
          <div class="panel p-crt"><div class="body"><div class="grid g1">${this.q("그룹 작성", iCreateGroup, "")}${this.q("유사 작성", iCreateSimilar, "")}</div></div><div class="name">작성</div></div>
        </div>
        <div class="accent">
          <div class="panel p-mode"><div class="body"><div class="mode">${this.q("편집 취소", iCancel, "")}${this.q("편집 완료", iFinish, "")}</div></div><div class="name">모드</div></div>
          <div class="panel p-draw"><div class="body"><div class="gallery">
            <div class="draws">${draws.map(([l, b], i) => html`<button class=${classMap({ on: this.tool === i })} aria-label=${l} @click=${() => (this.tool = i)}>${icon(24, 24, b)}</button>`)}</div>
            <div class="gscroll">${icon(10, 6, svg`<path d="M0 6h10L5 0z" fill="#b5b8bd"/>`)}${icon(10, 6, svg`<path d="M0 0h10L5 6z" fill="#b5b8bd"/>`)}${customize("#fff")}</div>
          </div></div><div class="name">그리기</div></div>
          <div class="panel p-wp"><div class="body"><div class="wp"><button class="big">${iWorkPlane}설정${caret()}</button><button class="big">${iShowPlane}표시</button><button class="big">${iViewer}뷰어</button></div></div><div class="name">작업 기준면</div></div>
          <div class="panel p-ext"><div class="body"><div class="depth"><label for="depth">${iDepth}깊이:</label><input id="depth" value="300.0" /></div></div><div class="name">돌출</div></div>
        </div>
      </section>

      <div class="options">
        <label class="l1"><input class="cb" type="checkbox" checked />체인</label>
        <label class="l2">간격띄우기:<input class="num" value="0.0" /></label>
        <label><input class="cb" type="checkbox" />반지름:</label>
        <div class="l3"><input class="num" value="1000.0" aria-label="반지름 값" disabled /></div>
      </div>

      <main class="main">
        <aside class="side">
          <h2 class="ptitle">특성${cross(12, "#b9bec6", 2.5)}</h2>
          <div class="family">${iFamilyThumb}${icon(10, 6, svg`<path d="M0 0h10L5 5z" fill="#75859d"/>`)}</div>
          <div class="type">
            <div class="sel"><select aria-label="유형"><option>돌출</option></select>${icon(14, 14, svg`<path d="M3 5l4 4 4-4" stroke="#5f6b7e" stroke-width="2.500"/>`)}</div>
            <button>${iEditType}유형 편집</button>
          </div>
          <div class="list">
            <div class="tbl"><table><colgroup><col class="c1" /><col /><col class="c3" /></colgroup><tbody>${props.map((p) => this.propRow(p))}</tbody></table></div>
            <div class="vs"><button aria-label="위로">${chevron("up")}</button><div class="track"><div class="thumb t1"></div></div><button aria-label="아래로">${chevron("down")}</button></div>
          </div>
          <div class="foot">
            <button class="on" aria-label="그룹 정렬">${iSortList}</button>
            <button aria-label="오름차순">${sortIcon("A", "Z", "#6fbdf5", "#e5e5e5")}</button>
            <button aria-label="내림차순">${sortIcon("Z", "A", "#e5e5e5", "#6fbdf5")}</button>
            <button class="apply">적용</button>
          </div>
          <h2 class="ptitle">프로젝트 탐색기 - 거더패밀리.rfa${cross(12, "#b9bec6", 2.5)}</h2>
          <div class="btabs">${browserTabs.map(([l, b], i) => html`<button class=${classMap({ on: i === 0 })} aria-label=${l}>${b}</button>`)}</div>
          <div class="browser">
            <label class="find">${iSearch("#9aa1ad", 2)}<input placeholder="검색" aria-label="검색" /></label>
            <div class="treebox">
              <ul class="tree">${tree.map((n) => html`<li class=${classMap({ pick: !!n.sel, bold: !!n.bold })}>${this.gutter(n)}<button>${n.d ? nothing : iViews}${n.t}</button></li>`)}</ul>
              <div class="vs"><button aria-label="위로">${chevron("up")}</button><div class="track"><div class="thumb t2"></div></div><button aria-label="아래로">${chevron("down")}</button></div>
            </div>
          </div>
        </aside>

        <section class="work">
          <nav class="vtabs">
            ${vt.map(([t, i], n) => html`<button class=${classMap({ vtab: true, on: this.view === n })} @click=${() => (this.view = n)}>${i}${t}${this.view === n ? html`<span class="x">${cross(12, "#b9bec6", 2.5)}</span>` : nothing}</button>`)}
            <button class="more" aria-label="탭 목록">${customize("#b5bac4")}</button>
          </nav>
          <div class="stage">
            <div class="canvas">
              <svg class="model" fill="none" role="img" aria-label="입면도">${girder}</svg>
              <input class="length" value="45" aria-label="길이" />
              <label class="accel"><input class="switch" type="checkbox" role="switch" /><span>가속 그래픽<em>기술 미리보기</em></span></label>
              <div class="nav">${icon(30, 113, svg`
                <circle cx="25" cy="5" r="4" fill="#4a4d53"/><path d="M23 3l4 4m0-4l-4 4" stroke="#ccc"/>
                <path d="M4 27q0-7 8-7h6q4 0 4 4v6q0 8-8 8-10 0-10-11z" fill="#a9acb1"/><circle cx="13" cy="29" r="5" stroke="#6d7178" stroke-width="1.500"/><circle cx="13" cy="29" r="8" stroke="#8a8e94"/>
                <text x="15" y="42" font-family="Open Sans,sans-serif" font-weight="700" font-size="9" fill="#37618f">2D</text>
                <path d="M12 49h6l-3 3zM12 91h6l-3 3z" fill="#4d5157"/><path d="M2 56.500h26" stroke="#4d5157"/>
                <path d="M7 65h11v11H7z" fill="#76916d" stroke="#55804d"/><circle cx="18" cy="75" r="3" fill="#d8d8d8"/><path d="M20 78l3 3" stroke="#777"/>
                <circle cx="25" cy="107" r="4" fill="#4a4d53"/><path d="M23 105h4M23 107h4l-2 2z" stroke="#ccc"/>`)}</div>
            </div>
            <div class="vs"><button aria-label="위로">${chevron("up")}</button><div class="track"><div class="thumb t3"></div></div><button aria-label="아래로">${chevron("down")}</button></div>
          </div>
          <div class="bar">
            <div class="ctl"><button class="scale">1 : 100</button>${viewControls.map(([l, b]) => this.q(l, b, "v"))}</div>
            <div class="hs"><button aria-label="왼쪽으로">${chevron("left")}</button><div class="hthumb"></div><button class="rt" aria-label="오른쪽으로">${chevron("right")}</button></div>
            <div class="grip">${icon(9, 9, svg`<path d="M6 0h3v3H6zM6 6h3v3H6zM0 6h3v3H0z" fill="#6b7382"/>`)}</div>
          </div>
        </section>
      </main>

      <footer class="status"><span>길이를 입력하십시오.</span>${statusIcons.map(([l, b]) => this.q(l, b, ""))}<button class="filter">${iFilter}:0</button></footer>
      <nav class="task">
        <button class="w start" aria-label="시작">${wStart}</button>
        <button class="wsearch">${iSearch("#fff", 2)}검색</button>
        <button class="w" aria-label="작업 보기">${wTask}</button>
        <button class="w run" aria-label="Chrome">${wChrome}</button>
        <button class="w run talk" aria-label="카카오톡">${wTalk}</button>
        <button class="w" aria-label="캡처 도구">${wSnip}</button>
        <button class="w" aria-label="파일 탐색기">${wFolder}</button>
        <button class="w run" aria-label="Revit">${wRevit}</button>
        <div class="tray">
          <button class="ime more" aria-label="숨겨진 아이콘 표시">${icon(16, 10, svg`<path d="M1 9l7-7 7 7" stroke="#fff" stroke-width="2"/>`)}</button>
          <button class="ime">가</button><button class="ime">한</button>
          <button class="net" aria-label="네트워크">${wWifi}${wMute}${wBattery}</button>
          <button class="clock"><span>오후 7:12</span><span>2025-11-12</span></button>
        </div>
      </nav>
    </div>`;
  }
}
